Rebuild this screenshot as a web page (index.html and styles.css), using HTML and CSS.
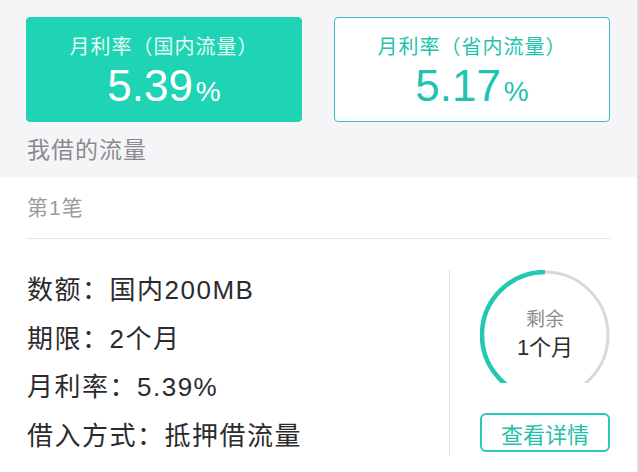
FILE: index.html
```html
<!DOCTYPE html>
<html lang="zh-CN">
<head>
  <meta charset="UTF-8">
  <meta name="viewport" content="width=device-width, initial-scale=1.0">
  <title>我借的流量</title>
  <link rel="stylesheet" href="styles.css">
</head>
<body>
  <div class="page">
    <div class="top">
      <div class="rates">
        <div class="rate rate-active">
          <div class="rate-title">月利率（国内流量）</div>
          <div class="rate-value">5.39<span class="pct">%</span></div>
        </div>
        <div class="rate">
          <div class="rate-title">月利率（省内流量）</div>
          <div class="rate-value">5.17<span class="pct">%</span></div>
        </div>
      </div>
      <div class="section-title">我借的流量</div>
    </div>

    <div class="loan">
      <div class="loan-head">第1笔</div>
      <div class="loan-body">
        <ul class="details">
          <li>数额：国内200MB</li>
          <li>期限：<b>2</b>个月</li>
          <li>月利率：5.39%</li>
          <li>借入方式：抵押借流量</li>
        </ul>
        <div class="side">
          <div class="ring">
            <svg width="130" height="113" viewBox="0 0 130 113">
              <path d="M65 2 A63 63 0 0 1 65 128" fill="none" stroke="#d9d9dc" stroke-width="3"/>
              <path d="M65 2 A63 63 0 0 0 65 128" fill="none" stroke="#22c9b1" stroke-width="4.5"/>
            </svg>
            <div class="ring-text">
              <span class="ring-label">剩余</span>
              <span class="ring-value">1个月</span>
            </div>
          </div>
          <button class="detail-btn">查看详情</button>
        </div>
      </div>
    </div>
  </div>
</body>
</html>
```

FILE: styles.css
```css
body {
  margin: 0;
  background: #fff;
  font-family: "Liberation Sans", "Noto Sans CJK SC", sans-serif;
}

.page {
  width: 637px;
  height: 472px;
  border-right: 2px solid #dcdcdf;
  overflow: hidden;
}

.top {
  background: #f5f5f8;
  padding: 17px 27px 0 26px;
  height: 160px;
}

.rates {
  display: grid;
  grid-template-columns: 276px 276px;
  gap: 32px;
}

.rate {
  height: 105px;
  box-sizing: border-box;
  border: 1px solid #3cbcc0;
  border-radius: 4px;
  background: #fff;
  color: #22c3ae;
  text-align: center;
  padding-top: 17px;
}

.rate-active {
  background: #1fd3b5;
  border-color: #1fd3b5;
  color: #fff;
}

.rate-active .rate-title {
  color: #e4fbf6;
}

.rate-title {
  font-size: 20px;
  line-height: 24px;
  letter-spacing: 1px;
}

.rate-value {
  font-size: 44px;
  line-height: 50px;
  margin-top: 2px;
}

.pct {
  font-size: 28px;
  margin-left: 3px;
}

.section-title {
  font-size: 23px;
  letter-spacing: 1px;
  color: #8a8a8e;
  line-height: 30px;
  margin-top: 13px;
  padding-left: 1px;
}

.loan {
  background: #fff;
  padding: 0 27px 0 26px;
}

.loan-head {
  font-size: 21px;
  letter-spacing: 1px;
  color: #9a9a9e;
  line-height: 61px;
  padding-left: 1px;
  border-bottom: 1px solid #e6e6e8;
}

.loan-body {
  display: flex;
  justify-content: space-between;
}

.details {
  list-style: none;
  margin: 0;
  padding: 27px 0 0 1px;
}

.details li {
  font-size: 26px;
  letter-spacing: 1.5px;
  line-height: 48.5px;
  color: #2b2b2e;
}

.details b {
  font-weight: normal;
}

.side {
  margin-top: 31px;
  height: 186px;
  border-left: 1px solid #e3e3e6;
  padding-left: 30px;
  display: flex;
  flex-direction: column;
}

.ring {
  display: grid;
  width: 130px;
}

.ring svg,
.ring-text {
  grid-area: 1 / 1;
}

.ring svg {
  display: block;
}

.ring-text {
  display: flex;
  flex-direction: column;
  align-items: center;
  padding-top: 36px;
}

.ring-label {
  font-size: 19px;
  color: #8a8a8e;
  line-height: 27px;
}

.ring-value {
  font-size: 22px;
  color: #2b2b2e;
  line-height: 30px;
}

.detail-btn {
  margin-top: 30px;
  width: 130px;
  height: 39px;
  border: 2px solid #2cc7b2;
  border-radius: 6px;
  background: #fff;
  color: #22bfa9;
  font-family: inherit;
  font-size: 22px;
  padding: 0;
}
```
